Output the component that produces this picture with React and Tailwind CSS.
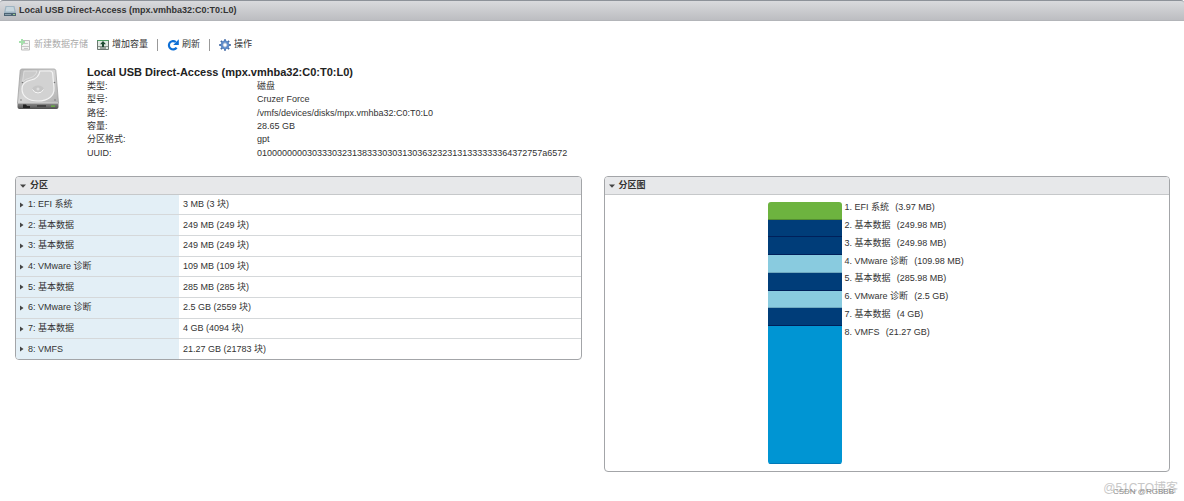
import React from "react";

const details = [
  ["类型:", "磁盘"],
  ["型号:", "Cruzer Force"],
  ["路径:", "/vmfs/devices/disks/mpx.vmhba32:C0:T0:L0"],
  ["容量:", "28.65 GB"],
  ["分区格式:", "gpt"],
  ["UUID:", "010000000030333032313833303031303632323131333333364372757a6572"],
];

const partitions = [
  { name: "EFI 系统", blocks: "3 MB (3 块)", size: "3.97 MB", color: "bg-[#6db33f] border-[#538d32]" },
  { name: "基本数据", blocks: "249 MB (249 块)", size: "249.98 MB", color: "bg-[#003d79] border-[#00205a]" },
  { name: "基本数据", blocks: "249 MB (249 块)", size: "249.98 MB", color: "bg-[#003d79] border-[#00205a]" },
  { name: "VMware 诊断", blocks: "109 MB (109 块)", size: "109.98 MB", color: "bg-[#89cbdf] border-[#6fa9c0]" },
  { name: "基本数据", blocks: "285 MB (285 块)", size: "285.98 MB", color: "bg-[#003d79] border-[#00205a]" },
  { name: "VMware 诊断", blocks: "2.5 GB (2559 块)", size: "2.5 GB", color: "bg-[#89cbdf] border-[#6fa9c0]" },
  { name: "基本数据", blocks: "4 GB (4094 块)", size: "4 GB", color: "bg-[#003d79] border-[#00205a]" },
  { name: "VMFS", blocks: "21.27 GB (21783 块)", size: "21.27 GB", color: "bg-[#0095d3] border-[#0079b8]" },
];

function DiskIcon() {
  return (
    <svg viewBox="0 0 42 42" className="h-[42px] w-[42px] shrink-0" aria-hidden="true">
      <defs>
        <linearGradient id="metal" x1="0" y1="0" x2="1" y2="1">
          <stop offset="0" stopColor="#b4b4b4" />
          <stop offset="0.5" stopColor="#d6d6d6" />
          <stop offset="1" stopColor="#b0b0b0" />
        </linearGradient>
        <linearGradient id="front" x1="0" y1="0" x2="0" y2="1">
          <stop offset="0" stopColor="#8d8d8d" />
          <stop offset="1" stopColor="#4e4e4e" />
        </linearGradient>
      </defs>
      <path d="M5 1 H37 Q38.500 1 38.800 2.500 L41.500 35 H0.500 L3.200 2.500 Q3.500 1 5 1Z" fill="url(#metal)" stroke="#a2a2a2" strokeWidth="0.800" />
      <path d="M0.500 35 H41.500 V39 Q41.500 41 39.500 41 H2.500 Q0.500 41 0.500 39Z" fill="url(#front)" />
      <path d="M1 35 H41" stroke="#eee" strokeWidth="0.800" />
      {/* Platter cover */}
      <path
        d="M23 3 H33 Q35.500 3 35.700 6 L37 20 C37.500 28 31 33 21 33 C11 33 5 28 5 21 C5 15 9 13 14 12 C20 11 22 8 23 3Z"
        fill="#d2d2d2" stroke="#f4f4f4" strokeWidth="1.200"
      />
      <path d="M7 3 H20 Q19 8 13 10 Q8 11 5.500 14Z" fill="#cbcbcb" stroke="#e6e6e6" strokeWidth="0.700" />
      <ellipse cx="21" cy="21.500" rx="6" ry="4" fill="#c6c6c6" />
      <path d="M15.500 21.500 Q17 25 21 25 Q25 25 26.500 21.500" fill="none" stroke="#fafafa" strokeWidth="1" />
      <circle cx="21" cy="21" r="1.500" fill="#dedede" />
      <circle cx="5.500" cy="14.500" r="0.800" fill="#777" />
      <circle cx="37.500" cy="14.500" r="0.800" fill="#777" />
      <circle cx="4" cy="32" r="0.800" fill="#777" />
      <circle cx="38" cy="32" r="0.800" fill="#777" />
      <path d="M6 36.500 H9 L10 38 H13 V40 H6Z" fill="#222" />
      <path d="M20 37 H29 V39 H20Z" fill="#444" />
      <path d="M34 37.500 H38 V38.800 H34Z" fill="#68b83e" />
    </svg>
  );
}

function SmallDiskIcon() {
  return (
    <svg viewBox="0 0 12 12" className="h-3 w-3 shrink-0" aria-hidden="true">
      <path d="M1.500 1 H10.500 L12 8 H0Z" fill="#9fb4c2" />
      <path d="M2.500 2 H9.500 L10.500 6.500 H1.500Z" fill="#c6d5dd" />
      <path d="M0 8 H12 V11 H0Z" fill="#4d6474" />
      <path d="M1 9.500 H7" stroke="#8ba0ad" />
      <path d="M9 9.500 H11" stroke="#9fce8c" />
    </svg>
  );
}

function NewDatastoreIcon() {
  return (
    <svg viewBox="0 0 12 12" className="h-3 w-3 shrink-0" fill="none" aria-hidden="true">
      <path d="M2.500 1.500 H10.500 V11 H2.500Z" fill="#f3f3f3" stroke="#bdbdbd" />
      <path d="M4 4.500 H9 M3 7.500 H10 M5 9.500 H9" stroke="#c8c8c8" />
      <path d="M3 0 V6 M0 3 H6" stroke="#a5e0ac" strokeWidth="2" />
    </svg>
  );
}

function IncreaseIcon() {
  return (
    <svg viewBox="0 0 12 12" className="h-3 w-3 shrink-0" fill="none" aria-hidden="true">
      <path d="M0.500 1.500 H11.500 V10.500 H0.500Z" fill="#e0eae3" stroke="#6c7770" />
      <path d="M0 1.500 H12" stroke="#4e9c62" />
      <path d="M1 7.500 H11" stroke="#8b948e" />
      <path d="M6 2 L9 5.300 H7 V8 H5 V5.300 H3Z" fill="#1f4a32" />
      <path d="M3 9 H9" stroke="#4c5750" />
    </svg>
  );
}

function RefreshIcon() {
  return (
    <svg viewBox="0 0 12 12" className="h-3 w-3 shrink-0" fill="none" aria-hidden="true">
      <path d="M8.800 3 A4.200 4.200 0 1 0 9.600 8.600" stroke="#0d6fd6" strokeWidth="2.200" />
      <path d="M11.800 0.300 V6 H6.200Z" fill="#0d6fd6" />
    </svg>
  );
}

function GearIcon() {
  return (
    <svg viewBox="0 0 12 12" className="h-3 w-3 shrink-0" fill="none" aria-hidden="true">
      <path
        d="M6 0.200 V11.800 M0.200 6 H11.800 M1.900 1.900 L10.100 10.100 M10.100 1.900 L1.900 10.100"
        stroke="#4a6fa8" strokeWidth="1.900"
      />
      <circle cx="6" cy="6" r="3.400" fill="#fff" stroke="#5c8bcb" strokeWidth="2" />
      <circle cx="6" cy="6" r="2.200" fill="#fff" stroke="#3e68a8" strokeWidth="0.600" />
    </svg>
  );
}

function Arrow({ open }) {
  return (
    <svg viewBox="0 0 6 6" className="h-[6px] w-[6px] shrink-0" fill="#444" aria-hidden="true">
      {open ? <path d="M0 1.500 H6 L3 4.800Z" /> : <path d="M1 0.500 V5.500 L4.500 3Z" />}
    </svg>
  );
}

function Panel({ title, children }) {
  return (
    <section className="min-w-0 flex-1 overflow-hidden rounded-[4px] border border-[#a3a5a8] bg-white">
      <h2 className="border-b border-[#c6c8ca] bg-[#e7e8ea] font-bold">
        <button type="button" className="flex h-[17px] w-full items-center gap-1 px-1">
          <Arrow open />
          {title}
        </button>
      </h2>
      {children}
    </section>
  );
}

function App() {
  return (
    <div className="min-h-screen bg-white font-['Liberation_Sans','Noto_Sans_CJK_SC',sans-serif] text-[9px] leading-[13px] text-[#333]">
      {/* Title bar */}
      <header className="flex h-[21px] items-center gap-[3px] rounded-t-[3px] border-t border-b border-t-[#8d9299] border-b-[#b3b5b9] bg-linear-to-b from-[#d9dadd] to-[#bcbdc1] px-1">
        <SmallDiskIcon />
        <h1 className="font-bold">Local USB Direct-Access (mpx.vmhba32:C0:T0:L0)</h1>
      </header>

      <main className="pr-[14px] pl-[15px]">
        {/* Toolbar */}
        <div className="flex items-center gap-[9px] pt-[17px] pl-1">
          <button type="button" disabled className="flex items-center gap-[3px] text-[#aaa]">
            <NewDatastoreIcon />
            新建数据存储
          </button>
          <button type="button" className="flex items-center gap-[3px]">
            <IncreaseIcon />
            增加容量
          </button>
          <span className="h-3 w-px bg-[#999]" />
          <button type="button" className="flex items-center gap-[3px]">
            <RefreshIcon />
            刷新
          </button>
          <span className="h-3 w-px bg-[#999]" />
          <button type="button" className="flex items-center gap-[3px]">
            <GearIcon />
            操作
          </button>
        </div>

        {/* Device details */}
        <div className="flex gap-[28px] pt-[14px] pl-[2px]">
          <div className="pt-[3px]">
            <DiskIcon />
          </div>
          <div>
            <h2 className="text-[11px] leading-[14px] font-bold text-[#222]">
              Local USB Direct-Access (mpx.vmhba32:C0:T0:L0)
            </h2>
            <dl className="grid h-[81px] grid-cols-[170px_auto] grid-rows-6 items-center pt-px">
              {details.map(([label, value]) => (
                <React.Fragment key={label}>
                  <dt>{label}</dt>
                  <dd>{value}</dd>
                </React.Fragment>
              ))}
            </dl>
          </div>
        </div>

        <div className="flex items-start gap-[22px] pt-4">
          {/* Partition list */}
          <Panel title="分区">
            <table className="h-[164px] w-full border-collapse text-left">
              <tbody>
                {partitions.map((item, index) => (
                  <tr key={index} className="border-b border-[#d5d8da] last:border-b-0">
                    <th scope="row" className="w-[163px] bg-[#e3eff6] p-0 pl-[3px] font-normal">
                      <button type="button" className="flex items-center gap-[3px]">
                        <Arrow />
                        {index + 1}: {item.name}
                      </button>
                    </th>
                    <td className="p-0 pl-1">{item.blocks}</td>
                  </tr>
                ))}
              </tbody>
            </table>
          </Panel>

          {/* Partition map */}
          <Panel title="分区图">
            <div className="flex items-start gap-[3px] pb-[7px]">
              <div className="flex w-[42%] justify-end pt-[7px]">
                <div className="grid h-[262px] w-[74px] grid-rows-[repeat(7,minmax(0,1fr))_138px] overflow-hidden rounded-[3px]">
                  {partitions.map((item, index) => (
                    <div key={index} className={`border-b ${item.color}`} />
                  ))}
                </div>
              </div>
              <ol className="mt-1 grid h-[142px] grid-rows-8 items-center">
                {partitions.map((item, index) => (
                  <li key={index} className="flex gap-[6px]">
                    <span>
                      {index + 1}. {item.name}
                    </span>
                    <span>({item.size})</span>
                  </li>
                ))}
              </ol>
            </div>
          </Panel>
        </div>
      </main>

      {/* Watermarks */}
      <footer className="relative flex justify-end pt-2 pr-[6px] text-[12px] leading-4 text-[#c8c8c8]">
        <span>@51CTO博客</span>
        <span className="absolute top-3 right-[10px] text-[8px] leading-4 text-[#888]">CSDN @RGBBB</span>
      </footer>
    </div>
  );
}

export default App;
